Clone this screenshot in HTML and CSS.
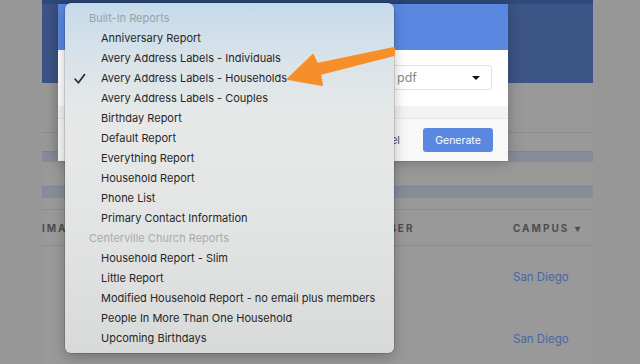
FILE: index.html
```html
<!DOCTYPE html>
<html>
<head>
<meta charset="utf-8">
<link rel="stylesheet" href="styles.css">
</head>
<body>
<div class="gutter"></div>
<div class="page">
  <div class="page-header"></div>
  <div class="page-spacer"></div>
  <div class="divider"></div>
  <div class="gap-a"></div>
  <div class="stripe stripe-a"></div>
  <div class="gap-b"></div>
  <div class="stripe stripe-b"></div>
  <div class="gap-c"></div>
  <div class="divider"></div>
  <div class="thead">
    <span class="th th-image">IMAGE</span>
    <span class="th th-number">NUMBER</span>
    <span class="th th-campus">CAMPUS <span class="caret">&#9662;</span></span>
  </div>
  <div class="divider"></div>
  <div class="trow"><span class="campus-link">San Diego</span></div>
  <div class="trow"><span class="campus-link">San Diego</span></div>
</div>
<div class="rest"></div>

<div class="modal">
  <div class="modal-header"></div>
  <div class="modal-body">
    <div class="select select-report"></div>
    <div class="select select-format"><span>pdf</span><span class="sel-caret"></span></div>
  </div>
  <div class="modal-band"></div>
  <div class="modal-footer">
    <span class="cancel">Cancel</span>
    <span class="btn-generate">Generate</span>
  </div>
</div>

<div class="menu">
  <div class="menu-group">Built-In Reports</div>
  <div class="menu-item">Anniversary Report</div>
  <div class="menu-item">Avery Address Labels - Individuals</div>
  <div class="menu-item checked"><svg class="check" width="12" height="12" viewBox="0 0 12 12"><path d="M1.2 6.2 L4.4 9.8 L10.6 1.6" fill="none" stroke="#2a2a2a" stroke-width="1.7" stroke-linecap="round" stroke-linejoin="round"/></svg>Avery Address Labels - Households</div>
  <div class="menu-item">Avery Address Labels - Couples</div>
  <div class="menu-item">Birthday Report</div>
  <div class="menu-item">Default Report</div>
  <div class="menu-item">Everything Report</div>
  <div class="menu-item">Household Report</div>
  <div class="menu-item">Phone List</div>
  <div class="menu-item">Primary Contact Information</div>
  <div class="menu-group group-2">Centerville Church Reports</div>
  <div class="menu-item">Household Report - Slim</div>
  <div class="menu-item">Little Report</div>
  <div class="menu-item">Modified Household Report - no email plus members</div>
  <div class="menu-item">People In More Than One Household</div>
  <div class="menu-item">Upcoming Birthdays</div>
</div>

<svg class="arrow" width="640" height="364" viewBox="0 0 640 364">
  <polygon points="288,79 313,55 317,64 394,48 394,55 320,74 322,85" fill="#f68f2a" stroke="#f68f2a" stroke-width="2" stroke-linejoin="round"/>
</svg>
</body>
</html>
```

FILE: styles.css
```css
html, body {
  margin: 0;
  padding: 0;
}
body {
  width: 640px;
  height: 364px;
  overflow: hidden;
  display: flex;
  background: #979797;
  font-family: "Inter", "Liberation Sans", sans-serif;
}
.gutter {
  width: 42px;
  flex: none;
}
.page {
  width: 551px;
  flex: none;
  background: #999999;
  display: flex;
  flex-direction: column;
  overflow: hidden;
}
.page > * {
  flex-shrink: 0;
}
.rest {
  flex: 1;
}
.page-header {
  height: 79px;
  border-top: 4px solid #2f4a7e;
  background: #3d5586;
}
.page-spacer { height: 49px; }
.divider { height: 1px; background: #8d8d8d; }
.gap-a { height: 18px; }
.gap-b { height: 24px; }
.gap-c { height: 11px; }
.stripe {
  border-top: 1px solid #7e8492;
  background: #878c99;
}
.stripe-a { height: 10px; }
.stripe-b { height: 11px; }
.thead {
  height: 35px;
  display: flex;
  align-items: center;
  font-size: 10px;
  font-weight: 700;
  letter-spacing: 2px;
  color: #4d4d4d;
}
.th-image { width: 317px; flex: none; }
.th-number { width: 154px; flex: none; }
.th-campus { flex: none; }
.caret { font-size: 10px; margin-left: 1px; letter-spacing: 0; }
.trow {
  height: 62px;
  display: flex;
  align-items: center;
  padding-left: 471px;
}
.campus-link {
  font-size: 11.5px;
  color: #4a66a6;
}

.modal {
  position: absolute;
  left: 58px;
  top: 4px;
  width: 450px;
  height: 157px;
  background: #f7f7f7;
  box-shadow: 0 0 14px rgba(0,0,0,0.28);
  display: flex;
  flex-direction: column;
}
.modal-header {
  height: 46px;
  background: #5a87e0;
}
.modal-body {
  height: 56px;
  box-sizing: border-box;
  padding: 15px 16px 16px;
  background: #ffffff;
  display: flex;
  gap: 8px;
}
.select {
  height: 25px;
  box-sizing: border-box;
  border: 1px solid #e1dfee;
  border-radius: 3px;
  background: #fff;
  font-size: 12px;
  color: #8a8a8a;
  display: flex;
  align-items: center;
  padding: 0 8px;
}
.select-report { width: 306px; }
.select-format {
  flex: 1;
  justify-content: space-between;
  font-size: 12.5px;
}
.sel-caret {
  width: 0;
  height: 0;
  border-left: 4px solid transparent;
  border-right: 4px solid transparent;
  border-top: 4px solid #111;
  margin-right: 3px;
}
.modal-band {
  height: 12px;
  background: #f3f3f3;
  border-bottom: 1px solid #e6e6e6;
}
.modal-footer {
  flex: 1;
  display: flex;
  align-items: center;
  justify-content: flex-end;
  padding-right: 15px;
  gap: 23px;
  background: #f8f8f8;
}
.cancel {
  font-size: 11px;
  color: #555;
}
.btn-generate {
  width: 70px;
  height: 24px;
  border-radius: 3px;
  background: #5a87e0;
  color: #fff;
  font-size: 10.5px;
  display: flex;
  align-items: center;
  justify-content: center;
}

.menu {
  position: absolute;
  left: 65px;
  top: 3px;
  width: 329px;
  height: 350px;
  box-sizing: border-box;
  padding: 5px 0;
  border-radius: 6px;
  background: linear-gradient(180deg, #c5dbea 0%, #dbe4e8 18%, #e7e9e9 34%, #e3e5e5 62%, #d8dada 100%);
  box-shadow: 0 0 0 0.5px rgba(0,0,0,0.25), 0 4px 14px rgba(0,0,0,0.25);
  font-size: 11px;
}
.menu-group {
  height: 20px;
  line-height: 20px;
  padding-left: 24px;
  color: #97a2aa;
}
.group-2 { color: #a6aaad; }
.menu-item {
  height: 20px;
  line-height: 20px;
  padding-left: 36px;
  color: #262626;
  position: relative;
  white-space: nowrap;
}
.check {
  position: absolute;
  left: 9px;
  top: 5px;
}
.arrow {
  position: absolute;
  left: 0;
  top: 0;
  pointer-events: none;
}
```
